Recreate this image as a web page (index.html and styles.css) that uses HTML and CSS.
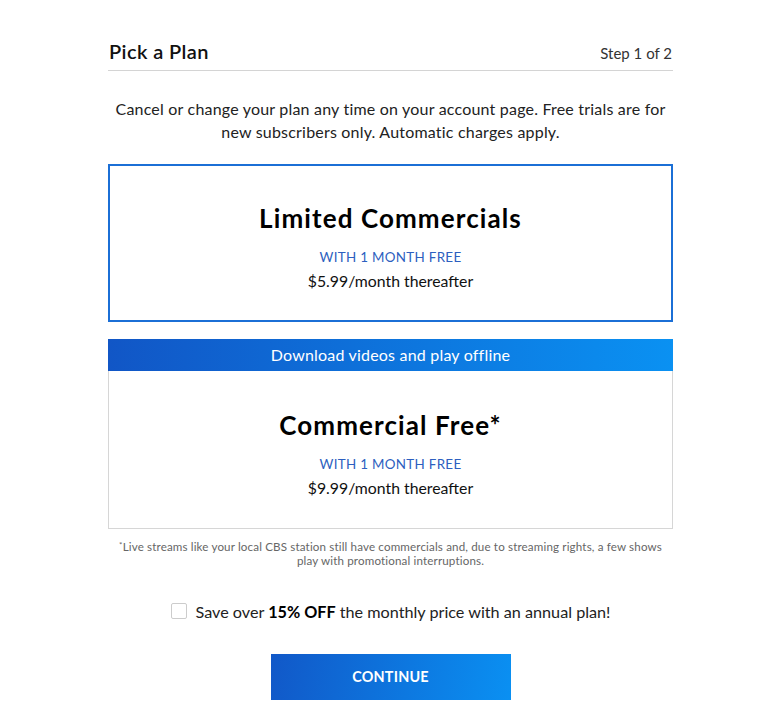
FILE: index.html
```html
<!DOCTYPE html>
<html lang="en">
<head>
<meta charset="utf-8" />
<title>Pick a Plan</title>
<link rel="stylesheet" href="styles.css">
</head>
<body>
<div class="page">
	<div class="head">
		<h1>Pick a Plan</h1>
		<span class="step">Step 1 of 2</span>
	</div>

	<p class="intro">Cancel or change your plan any time on your account page. Free trials are for new subscribers only. Automatic charges apply.</p>

	<div class="plan plan-on">
		<h2>Limited Commercials</h2>
		<div class="free">WITH 1 MONTH FREE</div>
		<div class="price">$5.99/month thereafter</div>
	</div>

	<div class="banner">Download videos and play offline</div>
	<div class="plan plan-off">
		<h2>Commercial Free*</h2>
		<div class="free">WITH 1 MONTH FREE</div>
		<div class="price">$9.99/month thereafter</div>
	</div>

	<p class="note"><sup>*</sup>Live streams like your local CBS station still have commercials and, due to streaming rights, a few shows play with promotional interruptions.</p>

	<label class="annual">
		<span class="box"></span>
		<span>Save over <b>15% OFF</b> the monthly price with an annual plan!</span>
	</label>

	<div class="actions">
		<a href="javascript:;" class="btn">CONTINUE</a>
	</div>
</div>
</body>
</html>
```

FILE: styles.css
```css
*{ margin:0; padding:0; box-sizing:border-box;}
body{ background:#fff; color:#111; font-family:Lato, "Liberation Sans", sans-serif;}
a{ text-decoration:none;}

.page{ width:565px; margin-left:108px; padding-top:39px; padding-bottom:22px;}

.head{ display:flex; justify-content:space-between; align-items:baseline; padding:0 1px 7px 1px; border-bottom:1px solid #d4d4d4;}
.head h1{ font-size:20px; line-height:24px; font-weight:600; letter-spacing:0.4px; color:#111;}
.step{ font-size:15px; color:#333;}

.intro{ margin:26px 0 21px; text-align:center; font-size:16px; line-height:23px; letter-spacing:0.2px; color:#222;}

.plan{ text-align:center; background:#fff;}
.plan h2{ font-size:26px; line-height:32px; font-weight:700; letter-spacing:1.1px; color:#000;}
.plan .free{ margin-top:14px; font-size:13.4px; line-height:18px; letter-spacing:0.3px; color:#2d5fc0;}
.plan .price{ margin-top:4px; font-size:15.8px; line-height:22px; color:#111;}
.plan-on{ border:2px solid #1b6fd6; padding:36px 0 28px;}
.plan-off{ border:1px solid #d6d6d6; border-top:0; padding:38px 0 29px;}

.banner{ margin-top:17px; height:32px; line-height:32px; text-align:center; color:#fff; font-size:16px; letter-spacing:0.2px; background:linear-gradient(90deg,#1156c6,#0a91f2);}

.note{ margin-top:9px; text-align:center; font-size:11.6px; line-height:14px; letter-spacing:0.15px; color:#666;}
.note sup{ font-size:8px; vertical-align:3px;}

.annual{ display:flex; justify-content:center; align-items:center; gap:9px; margin-top:32px; font-size:16.2px; line-height:24px; color:#222;}
.annual b{ color:#000;}
.box{ width:16px; height:16px; border:1px solid #ccc; border-radius:2px; margin-top:-2px;}

.actions{ display:flex; justify-content:center; margin-top:30px;}
.btn{ display:block; width:240px; height:46px; line-height:46px; text-align:center; color:#fff; font-size:14.4px; font-weight:700; letter-spacing:0.2px; background:linear-gradient(100deg,#1158c8,#0a90f2);}
```
